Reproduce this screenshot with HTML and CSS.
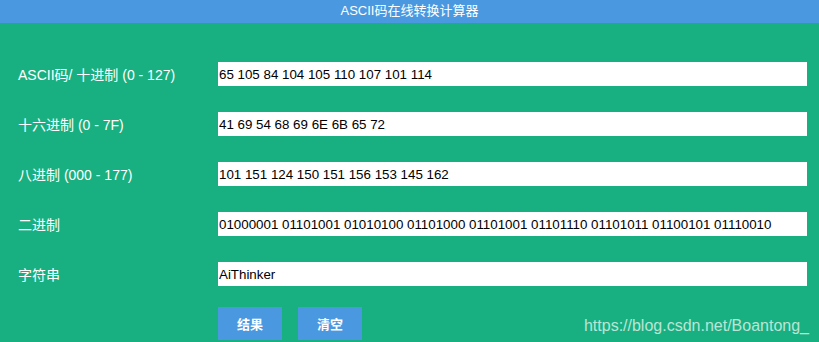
FILE: index.html
```html
<!DOCTYPE html>
<html lang="zh-CN">
<head>
  <meta charset="UTF-8">
  <title>ASCII码在线转换计算器</title>
  <link rel="stylesheet" href="styles.css">
</head>
<body>
  <div class="header">ASCII码在线转换计算器</div>

  <form class="converter">
    <div class="row">
      <label for="dec">ASCII码/ 十进制 (0 - 127)</label>
      <input type="text" id="dec" value="65 105 84 104 105 110 107 101 114">
    </div>
    <div class="row">
      <label for="hex">十六进制 (0 - 7F)</label>
      <input type="text" id="hex" value="41 69 54 68 69 6E 6B 65 72">
    </div>
    <div class="row">
      <label for="oct">八进制 (000 - 177)</label>
      <input type="text" id="oct" value="101 151 124 150 151 156 153 145 162">
    </div>
    <div class="row">
      <label for="bin">二进制</label>
      <input type="text" id="bin" value="01000001 01101001 01010100 01101000 01101001 01101110 01101011 01100101 01110010">
    </div>
    <div class="row">
      <label for="str">字符串</label>
      <input type="text" id="str" value="AiThinker">
    </div>
    <div class="buttons">
      <button type="button">结果</button>
      <button type="reset">清空</button>
    </div>
  </form>

  <div class="watermark">https://blog.csdn.net/Boantong_</div>
</body>
</html>
```

FILE: styles.css
```css
html, body {
  margin: 0;
  height: 100%;
}

body {
  font-family: "Liberation Sans", Arial, "Noto Sans CJK SC", sans-serif;
  background-color: #19b081;
  overflow: hidden;
  position: relative;
}

.header {
  height: 23px;
  line-height: 22px;
  background-color: #4a98e0;
  color: #fff;
  text-align: center;
  font-size: 13px;
}

.converter {
  padding: 39px 12px 0 18px;
  display: flex;
  flex-direction: column;
  gap: 26px;
}

.row {
  display: grid;
  grid-template-columns: 200px 1fr;
  align-items: center;
  height: 24px;
}

.row label {
  color: #fff;
  font-size: 14px;
}

.row input {
  height: 24px;
  box-sizing: border-box;
  border: none;
  outline: none;
  padding: 0 1px;
  font-family: "Liberation Sans", Arial, sans-serif;
  font-size: 13.33px;
  color: #000;
  background: #fff;
}

.buttons {
  margin-top: -5px;
  padding-left: 200px;
  display: flex;
  gap: 16px;
}

.buttons button {
  width: 64px;
  height: 33px;
  border: none;
  background-color: #4a98e0;
  color: #fff;
  font-family: "Noto Sans CJK SC", sans-serif;
  font-weight: bold;
  font-size: 13px;
  padding: 0;
}

.watermark {
  position: absolute;
  right: 10px;
  bottom: 7px;
  font-size: 16px;
  color: rgba(255, 255, 255, 0.7);
}
```
